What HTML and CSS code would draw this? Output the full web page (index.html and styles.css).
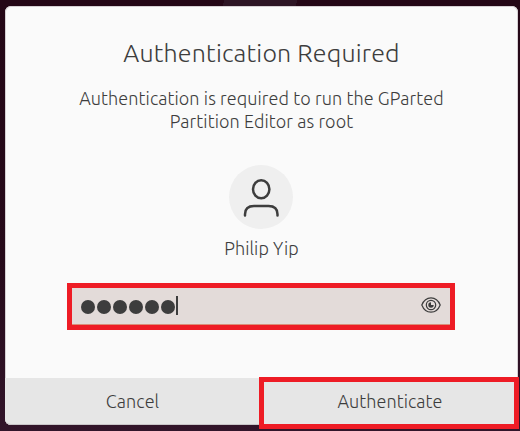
FILE: index.html
```html
<!DOCTYPE html>
<html lang="en">
<head>
<meta charset="utf-8">
<title>Authentication Required</title>
<link rel="stylesheet" href="styles.css">
</head>
<body>
<main class="dialog">
  <section class="content">
    <h1 class="title">Authentication Required</h1>
    <p class="message">Authentication is required to run the GParted<br>Partition Editor as root</p>
    <div class="avatar">
      <svg width="64" height="64" viewBox="0 0 64 64" fill="none" stroke="#3d3d3d" stroke-width="2.5" stroke-linecap="round">
        <ellipse cx="32.200" cy="24.200" rx="8.200" ry="9"/>
        <path d="M16 50.500v-1.200c0-6 3.500-8.300 9-8.300h14.500c5.500 0 9 2.300 9 8.300v1.200"/>
      </svg>
    </div>
    <div class="name">Philip Yip</div>
    <div class="entry">
      <div class="dots"><i></i><i></i><i></i><i></i><i></i><i></i></div>
      <span class="caret"></span>
      <svg class="eye" width="20" height="16" viewBox="0 0 20 16" fill="none" stroke="#3d3d3d" stroke-width="1.2">
        <path d="M.8 8C2.700 3.200 6 .8 10 .8S17.300 3.200 19.200 8C17.300 12.800 14 15.200 10 15.200S2.700 12.800.8 8Z"/>
        <circle cx="10" cy="8" r="4.700"/>
        <path d="M10 5.300V8h2.700A2.700 2.700 0 1 1 10 5.300Z" fill="#3d3d3d" stroke="none"/>
      </svg>
    </div>
  </section>
  <footer class="actions">
    <button class="button cancel">Cancel</button>
    <button class="button authenticate">Authenticate</button>
  </footer>
</main>
</body>
</html>
```

FILE: styles.css
```css
* { box-sizing: border-box; }
body {
  margin: 0;
  height: 431px;
  padding: 6px 2px 6px 5px;
  overflow: hidden;
  background: linear-gradient(100deg, transparent 43%, #2d1524 43%, #2d1524 57%, transparent 57%) top / 100% 6px no-repeat, linear-gradient(#240716, #260a1a 60%, #32152a);
  color: #3d3d3d;
  font-family: Ubuntu, "Noto Sans", sans-serif;
  font-weight: 300;
}
.dialog {
  display: flex;
  flex-direction: column;
  height: 419px;
  border-radius: 6px;
  background: #fafafa;
  box-shadow: inset 0 0 0 1px #d5d0d3;
}
.content {
  display: flex;
  flex-direction: column;
  align-items: center;
  height: 371px;
  margin: 1px 2px 0 1px;
  padding: 30px 1px 0 0;
}
.title { margin: 0; padding-left: 2px; font-size: 25px; line-height: 32px; font-weight: 300; letter-spacing: .19px; white-space: nowrap; }
.message { margin: 18px 0 0; padding-left: 2px; font-size: 18px; letter-spacing: .09px; line-height: 23px; text-align: center; white-space: nowrap; }
.avatar { width: 64px; height: 64px; margin-top: 32px; border-radius: 50%; background: #efefef; }
.avatar svg { display: block; }
.name { margin-top: 7px; padding-left: 2px; font-size: 18px; letter-spacing: .07px; line-height: 24px; }
.entry {
  display: flex;
  align-items: center;
  width: 388px;
  height: 47px;
  margin-top: 23px;
  padding: 0 8px 0 9px;
  border: 5px solid #ee1c25;
  background: #e3dbd9;
  box-shadow: inset 0 -1px #d98e79;
}
.dots { display: flex; gap: 2px; padding-top: 1px; }
.dots i { width: 14px; height: 14px; border-radius: 50%; background: #3d3d3d; }
.caret { width: 2px; height: 19px; margin: 0 0 2px 1px; background: #3d3d3d; }
.eye { margin: 0 1px 3px auto; }
.actions {
  display: grid;
  grid-template-columns: 254px 260px;
  height: 47px;
}
.button {
  height: 47px;
  margin: 0;
  padding: 0;
  border: 0;
  background: #e6e6e6;
  color: inherit;
  font: inherit;
  font-size: 18px;
  letter-spacing: .07px;
}
.cancel { padding: 0 0 1px 1px; border-radius: 0 0 0 6px; border-bottom: 1px solid #c9c6c8; }
.authenticate { height: 52px; margin-top: -1px; padding: 0 0 4px 2px; border: 5px solid #ee1c25; }
```
